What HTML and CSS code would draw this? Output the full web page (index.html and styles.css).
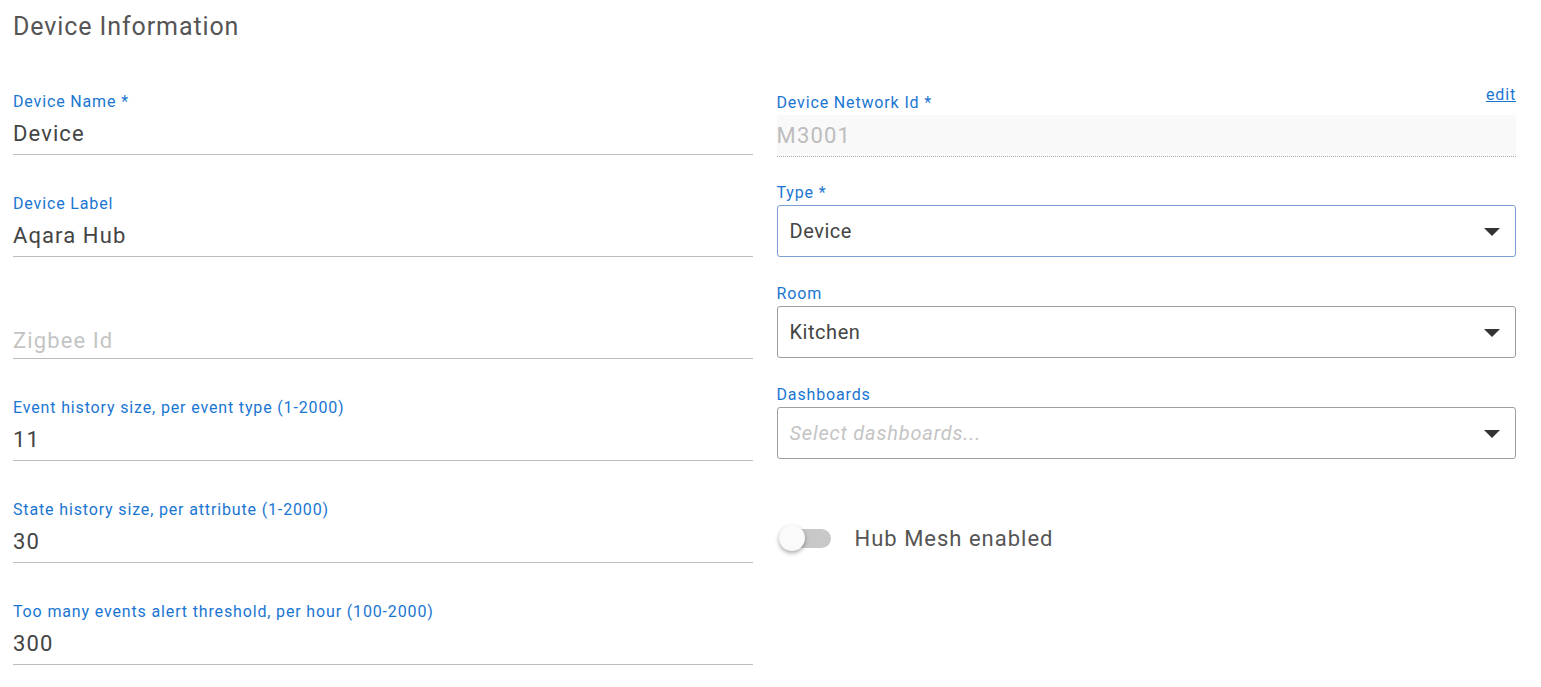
FILE: index.html
```html
<!DOCTYPE html>
<html lang="en">
<head>
  <meta charset="UTF-8" />
  <title>Device Information</title>
  <link rel="stylesheet" href="styles.css">
</head>
<body>
  <h1 class="page-title">Device Information</h1>

  <div class="form-grid">
    <div class="col">
      <div class="field">
        <label>Device Name *</label>
        <div class="line-input">Device</div>
      </div>
      <div class="field">
        <label>Device Label</label>
        <div class="line-input">Aqara Hub</div>
      </div>
      <div class="field">
        <label></label>
        <div class="line-input placeholder">Zigbee Id</div>
      </div>
      <div class="field">
        <label>Event history size, per event type (1-2000)</label>
        <div class="line-input">11</div>
      </div>
      <div class="field">
        <label>State history size, per attribute (1-2000)</label>
        <div class="line-input">30</div>
      </div>
      <div class="field">
        <label>Too many events alert threshold, per hour (100-2000)</label>
        <div class="line-input">300</div>
      </div>
    </div>

    <div class="col">
      <div class="field dni">
        <div class="label-row">
          <label>Device Network Id *</label>
          <a href="#" class="edit-link">edit</a>
        </div>
        <div class="line-input disabled">M3001</div>
      </div>
      <div class="field box-field">
        <label>Type *</label>
        <div class="select-box focused"><span>Device</span><i class="caret"></i></div>
      </div>
      <div class="field box-field">
        <label>Room</label>
        <div class="select-box"><span>Kitchen</span><i class="caret"></i></div>
      </div>
      <div class="field box-field">
        <label>Dashboards</label>
        <div class="select-box"><span class="placeholder-it">Select dashboards...</span><i class="caret"></i></div>
      </div>
      <div class="switch-row">
        <span class="switch"><span class="track"></span><span class="thumb"></span></span>
        <span class="switch-label">Hub Mesh enabled</span>
      </div>
    </div>
  </div>
</body>
</html>
```

FILE: styles.css
```css
body {
  margin: 0;
  padding: 0 25px 0 13px;
  font-family: Roboto, "Liberation Sans", sans-serif;
  background: #fff;
  color: #444;
}
.page-title {
  margin: 0;
  padding-top: 12px;
  height: 80px;
  font-size: 25px;
  font-weight: 400;
  line-height: 30px;
  letter-spacing: 0.9px;
  color: #555;
}
.form-grid {
  display: grid;
  grid-template-columns: 1fr 1fr;
  column-gap: 24px;
}
.field {
  margin-bottom: 39px;
}
.field label {
  display: block;
  height: 20px;
  line-height: 20px;
  font-size: 16px;
  letter-spacing: 0.85px;
  color: #1a76d2;
}
.line-input {
  height: 42px;
  line-height: 44px;
  font-size: 22px;
  letter-spacing: 1.1px;
  color: #444;
  border-bottom: 1px solid #bdbdbd;
}
.line-input.placeholder {
  color: #c4c4c4;
  line-height: 50px;
}
.dni {
  margin-bottom: 25px;
}
.label-row {
  display: flex;
  justify-content: space-between;
  align-items: flex-start;
  height: 23px;
}
.label-row label {
  line-height: 22px;
}
.edit-link {
  font-size: 16px;
  letter-spacing: 0.85px;
  color: #1a76d2;
  text-decoration: underline;
  line-height: 20px;
  margin-top: -7px;
}
.line-input.disabled {
  height: 41px;
  line-height: 41px;
  background: #f9f9f9;
  color: #bdbdbd;
  letter-spacing: 1.2px;
  border-bottom: 1px dotted #aaa;
}
.box-field {
  margin-bottom: 26px;
}
.box-field label {
  height: 21px;
  line-height: 22px;
  margin-bottom: 2px;
}
.select-box {
  height: 50px;
  border: 1px solid #9e9e9e;
  border-radius: 3px;
  display: flex;
  align-items: center;
  justify-content: space-between;
  padding: 0 14px 0 12px;
  font-size: 20px;
  letter-spacing: 0.55px;
  color: #444;
}
.select-box.focused {
  border-color: #7e9fd4;
}
.placeholder-it {
  font-style: italic;
  letter-spacing: 0.8px;
  color: #c4c4c4;
}
.caret {
  width: 0;
  height: 0;
  border-left: 8px solid transparent;
  border-right: 8px solid transparent;
  border-top: 8px solid #333;
  margin-top: 2px;
  margin-right: 1px;
}
.switch-row {
  display: flex;
  align-items: center;
  margin-top: 66px;
}
.switch {
  position: relative;
  width: 54px;
  height: 26px;
  margin-right: 24px;
}
.switch .track {
  position: absolute;
  left: 14px;
  top: 4px;
  width: 40px;
  height: 19px;
  border-radius: 10px;
  background: #c8c8c8;
}
.switch .thumb {
  position: absolute;
  left: 2px;
  top: 0;
  width: 26px;
  height: 26px;
  border-radius: 50%;
  background: #fafafa;
  box-shadow: 0 2px 4px rgba(0, 0, 0, 0.35);
}
.switch-label {
  font-size: 22px;
  letter-spacing: 1px;
  color: #555;
}
```
